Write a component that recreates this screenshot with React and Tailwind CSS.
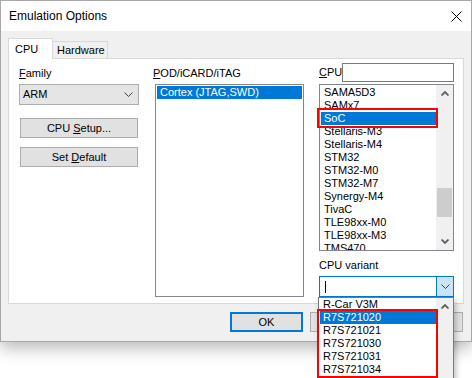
import React from 'react';

const cpuItems = [
  'SAMA5D3',
  'SAMx7',
  'SoC',
  'Stellaris-M3',
  'Stellaris-M4',
  'STM32',
  'STM32-M0',
  'STM32-M7',
  'Synergy-M4',
  'TivaC',
  'TLE98xx-M0',
  'TLE98xx-M3',
  'TMS470',
];

const variantItems = ['R-Car V3M', 'R7S721020', 'R7S721021', 'R7S721030', 'R7S721031', 'R7S721034'];

const ComboChevron = () => (
  <svg width="9" height="5" viewBox="0 0 9 5" className="shrink-0">
    <path d="M0.5 0.5 L4.5 4.5 L8.5 0.5" fill="none" stroke="#404040" strokeWidth="1" />
  </svg>
);

const ScrollArrow = ({ up }) => (
  <svg width="8" height="5" viewBox="0 0 8 5">
    <path
      d={up ? 'M0.5 4.5 L4 1 L7.5 4.5' : 'M0.5 0.5 L4 4 L7.5 0.5'}
      fill="none"
      stroke="#606060"
      strokeWidth="1.8"
    />
  </svg>
);

const ListItem = ({ label, selected }) => (
  <div
    className={`h-[13px] leading-[13px] pl-[3px] whitespace-nowrap ${
      selected ? 'bg-[#0078d7] text-white' : 'text-black'
    }`}
  >
    {label}
  </div>
);

const Button = ({ children, primary, className = '', ...rest }) => (
  <div
    {...rest}
    className={`h-[20px] flex items-center justify-center bg-[#e1e1e1] ${
      primary ? 'border-2 border-[#0078d7]' : 'border border-[#adadad]'
    } ${className}`}
  >
    {children}
  </div>
);

export default function App() {
  return (
    <div
      className="relative w-[472px] h-[378px] bg-white overflow-hidden text-[11px] text-black"
      style={{ fontFamily: '"Liberation Sans", Arial, sans-serif' }}
    >
      {/* Dialog window */}
      <div className="w-[472px] h-[342px] border border-[#a8a8a8] flex flex-col shadow-[0_6px_16px_rgba(0,0,0,0.28)]">
        {/* Title bar */}
        <div className="h-[30px] bg-white flex items-center justify-between pl-[8px] pr-[9px]">
          <span className="text-[12px]">Emulation Options</span>
          <svg width="11" height="11" viewBox="0 0 11 11">
            <path d="M0.5 0.5 L10.5 10.5 M10.5 0.5 L0.5 10.5" stroke="#000" strokeWidth="1" />
          </svg>
        </div>

        {/* Body */}
        <div className="flex-1 bg-[#f0f0f0] flex flex-col">
          {/* Tabs */}
          <div className="mt-[7px] ml-[7px] h-[20px] flex items-end">
            <div className="relative z-10 -mb-px w-[45px] h-[21px] bg-white border border-b-0 border-[#d9d9d9] pl-[6px] flex items-center">
              CPU
            </div>
            <div className="w-[55px] h-[17px] border border-l-0 border-b-0 border-[#d9d9d9] pl-[4px] flex items-center">
              Hardware
            </div>
          </div>

          {/* Panel */}
          <div className="ml-[7px] w-[456px] h-[246px] bg-white border border-[#d9d9d9] flex">
            {/* Family column */}
            <div className="ml-[10px] w-[120px] pt-[8px] flex flex-col">
              <div className="h-[17px] leading-[13px]">
                <span className="underline">F</span>amily
              </div>
              <div className="h-[21px] bg-[#e5e5e5] border border-[#adadad] flex items-center justify-between pl-[3px] pr-[5px]">
                <span>ARM</span>
                <ComboChevron />
              </div>
              <Button className="mt-[13px] ml-px w-[118px]">
                <span>
                  CPU <span className="underline">S</span>etup...
                </span>
              </Button>
              <Button className="mt-[9px] ml-px w-[118px]">
                <span>
                  Set <span className="underline">D</span>efault
                </span>
              </Button>
            </div>

            {/* POD column */}
            <div className="ml-[14px] w-[151px] pt-[8px] flex flex-col">
              <div className="h-[17px] leading-[13px]">
                <span className="underline">P</span>OD/iCARD/iTAG
              </div>
              <div className="ml-[2px] w-[149px] h-[213px] border border-[#828790] bg-white p-px">
                <ListItem label="Cortex (JTAG,SWD)" selected />
              </div>
            </div>

            {/* CPU column */}
            <div className="ml-[15px] w-[135px] pt-[4px] flex flex-col">
              <div className="h-[19px] flex items-center justify-between">
                <span className="leading-[13px]">
                  <span className="underline">C</span>PU
                </span>
                <div className="w-[113px] h-[19px] border border-[#7a7a7a] bg-white" />
              </div>
              <div className="mt-[2px] w-[135px] h-[167px] border border-[#828790] bg-white flex overflow-hidden">
                <div className="flex-1 pt-px pl-px overflow-hidden">
                  {cpuItems.map((item) => (
                    <ListItem key={item} label={item} selected={item === 'SoC'} />
                  ))}
                </div>
                <div className="w-[17px] bg-[#f0f0f0] flex flex-col items-center">
                  <div className="h-[17px] flex items-center justify-center">
                    <ScrollArrow up />
                  </div>
                  <div className="mt-[86px] w-[15px] h-[29px] bg-[#cdcdcd]" />
                  <div className="mt-[16px] h-[17px] flex items-center justify-center">
                    <ScrollArrow />
                  </div>
                </div>
              </div>
              <div className="mt-[8px] h-[17px] leading-[13px]">CPU variant</div>
              <div className="h-[21px] border border-[#0078d7] bg-white flex">
                <div className="flex-1 flex items-center pl-[5px]">
                  <div className="w-px h-[12px] bg-black" />
                </div>
                <div className="w-[17px] bg-[#cce4f7] border-l border-[#0078d7] flex items-center justify-center">
                  <ComboChevron />
                </div>
              </div>
            </div>
          </div>

          {/* Dialog buttons (the two on the right sit under the open dropdown) */}
          <div className="mt-[8px] pr-[8px] flex justify-end gap-[7px]">
            <Button primary className="w-[73px]">OK</Button>
            <Button className="w-[73px]" aria-label="Cancel" />
            <Button className="w-[73px]" aria-label="Help" />
          </div>
        </div>
      </div>

      {/* Open variant dropdown */}
      <div className="absolute left-[318px] top-[297px] w-[136px] h-[90px] bg-white border border-[#7a7a7a] flex shadow-[2px_3px_6px_rgba(0,0,0,0.25)]">
        <div className="flex-1 pl-px overflow-hidden">
          {variantItems.map((item) => (
            <ListItem key={item} label={item} selected={item === 'R7S721020'} />
          ))}
        </div>
        <div className="w-[17px] bg-[#f0f0f0] flex flex-col items-center">
          <div className="h-[17px] flex items-center justify-center">
            <ScrollArrow up />
          </div>
        </div>
      </div>

      {/* Red highlight annotations */}
      <div className="absolute left-[317px] top-[108px] w-[121px] h-[20px] border-2 border-[#ff0000]" />
      <div className="absolute left-[317px] top-[309px] w-[121px] h-[69px] border-2 border-[#ff0000]" />
    </div>
  );
}
